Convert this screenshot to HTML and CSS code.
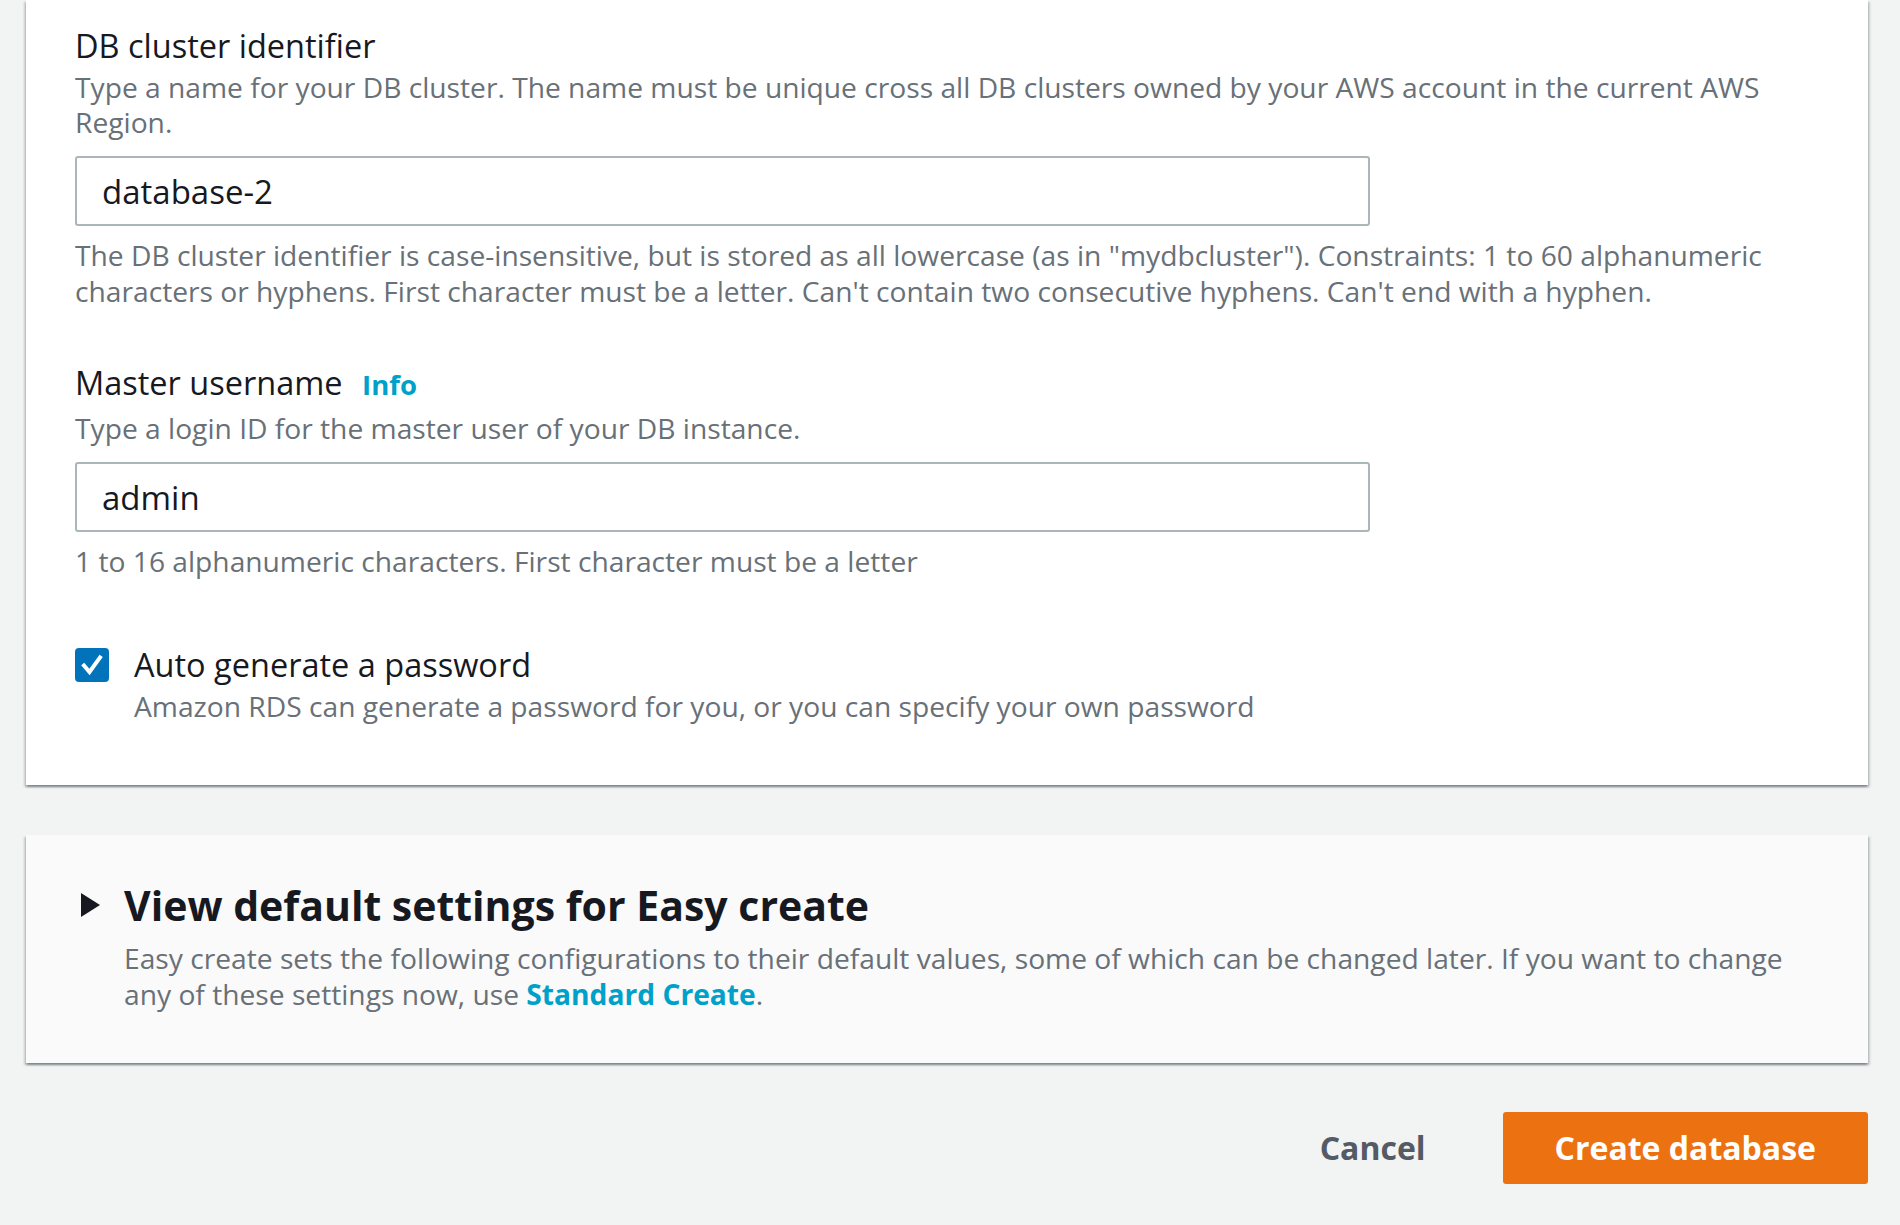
FILE: index.html
```html
<!DOCTYPE html>
<html lang="en">
<head>
<meta charset="utf-8">
<title>Create database</title>
<link rel="stylesheet" href="styles.css">
</head>
<body>
<div class="page">
  <section class="panel form-panel">
    <div class="field">
      <div class="label">DB cluster identifier</div>
      <div class="desc">Type a name for your DB cluster. The name must be unique cross all DB clusters owned by your AWS account in the current AWS Region.</div>
      <input class="text-input" type="text" value="database-2">
      <div class="hint">The DB cluster identifier is case-insensitive, but is stored as all lowercase (as in "mydbcluster"). Constraints: 1 to 60 alphanumeric characters or hyphens. First character must be a letter. Can't contain two consecutive hyphens. Can't end with a hyphen.</div>
    </div>
    <div class="field field-user">
      <div class="label">Master username <a class="info" href="#">Info</a></div>
      <div class="desc desc-user">Type a login ID for the master user of your DB instance.</div>
      <input class="text-input" type="text" value="admin">
      <div class="hint">1 to 16 alphanumeric characters. First character must be a letter</div>
    </div>
    <div class="check-row">
      <span class="checkbox">
        <svg width="34" height="34" viewBox="0 0 34 34" aria-hidden="true"><rect x="0" y="0" width="34" height="34" rx="4" fill="#0073bb"/><path d="M9 17.5 L14.5 24 L25 9.5" fill="none" stroke="#ffffff" stroke-width="4" stroke-linecap="square" stroke-linejoin="miter"/></svg>
      </span>
      <span class="check-label">Auto generate a password</span>
      <span class="check-desc">Amazon RDS can generate a password for you, or you can specify your own password</span>
    </div>
  </section>

  <section class="panel expand-panel">
    <div class="expand-grid">
      <span class="caret">
        <svg width="20" height="24" viewBox="0 0 20 24" aria-hidden="true"><polygon points="0,0 19,12 0,24" fill="#16191f"/></svg>
      </span>
      <h2 class="expand-title">View default settings for Easy create</h2>
      <p class="expand-body">Easy create sets the following configurations to their default values, some of which can be changed later. If you want to change any of these settings now, use <a class="link-bold" href="#">Standard Create</a>.</p>
    </div>
  </section>

  <div class="actions">
    <button class="btn btn-link" type="button">Cancel</button>
    <button class="btn btn-primary" type="button">Create database</button>
  </div>
</div>
</body>
</html>
```

FILE: styles.css
```css
* { box-sizing: border-box; }
html, body {
  margin: 0;
  padding: 0;
  background: #f2f3f3;
  font-family: "Open Sans", "Noto Sans", "Liberation Sans", sans-serif;
  color: #16191f;
}
.page {
  padding: 0 32px 0 26px;
  width: 1900px;
  height: 1225px;
  overflow: hidden;
}
.panel {
  box-shadow: 0 2px 2px 0 rgba(0, 28, 36, 0.3), 2px 2px 2px 0 rgba(0, 28, 36, 0.15), -2px 2px 2px 0 rgba(0, 28, 36, 0.15);
}
.form-panel {
  background: #ffffff;
  padding: 22px 48px 61px 49px;
}
.label {
  font-size: 32.5px;
  line-height: 48px;
  color: #16191f;
}
.info {
  font-size: 27.5px;
  font-weight: 700;
  color: #00a1c9;
  text-decoration: none;
  margin-left: 11px;
}
.desc, .hint, .check-desc, .expand-body {
  font-size: 28.2px;
  line-height: 35.2px;
  color: #687078;
}
.desc-user { margin-top: 2px; }
.text-input {
  display: block;
  width: 1295px;
  height: 70px;
  margin: 16px 0 0 0;
  padding: 0 25px;
  border: 2px solid #aab7b8;
  border-radius: 3px;
  background: #ffffff;
  font-family: "Open Sans", "Noto Sans", "Liberation Sans", sans-serif;
  font-size: 33px;
  color: #16191f;
  outline: none;
}
.hint { margin-top: 12px; }
.field-user { margin-top: 50px; }
.check-row {
  margin-top: 62px;
  display: grid;
  grid-template-columns: 34px 1fr;
  column-gap: 25px;
}
.checkbox {
  grid-column: 1;
  grid-row: 1;
  align-self: center;
  width: 34px;
  height: 34px;
  display: block;
}
.checkbox svg { display: block; }
.check-label {
  grid-column: 2;
  grid-row: 1;
  font-size: 32.5px;
  line-height: 48px;
  color: #16191f;
}
.check-desc {
  grid-column: 2;
  grid-row: 2;
}
.expand-panel {
  margin-top: 50px;
  background: #fafafa;
  padding: 46px 48px 51px 49px;
}
.expand-grid {
  display: grid;
  grid-template-columns: 49px 1fr;
}
.caret {
  grid-column: 1;
  grid-row: 1;
  align-self: center;
  padding-left: 6px;
  display: block;
  height: 24px;
}
.caret svg { display: block; }
.expand-title {
  grid-column: 2;
  grid-row: 1;
  margin: 0;
  font-size: 41px;
  line-height: 48px;
  font-weight: 700;
  color: #16191f;
}
.expand-body {
  grid-column: 2;
  grid-row: 2;
  margin: 12px 0 0 0;
}
.link-bold {
  color: #00a1c9;
  font-weight: 700;
  text-decoration: none;
}
.actions {
  margin-top: 49px;
  display: flex;
  justify-content: flex-end;
  align-items: center;
  gap: 25px;
}
.btn {
  height: 72px;
  border: none;
  border-radius: 3px;
  font-family: "Open Sans", "Noto Sans", "Liberation Sans", sans-serif;
  font-size: 32px;
  font-weight: 700;
  padding: 0 52px;
  cursor: pointer;
}
.btn-link {
  background: transparent;
  color: #545b64;
}
.btn-primary {
  background: #ec7211;
  color: #ffffff;
}
```
